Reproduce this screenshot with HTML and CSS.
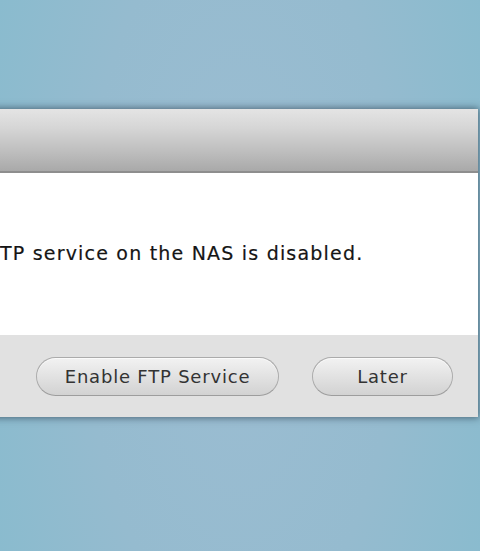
FILE: index.html
```html
<!DOCTYPE html>
<html lang="en">
<head>
    <meta charset="UTF-8">
    <meta name="viewport" content="width=device-width, initial-scale=1.0">
    <title>FTP Service</title>
    <link rel="stylesheet" href="styles.css">
</head>
<body>
    <div class="dialog">
        <div class="dialog-header"></div>
        <div class="dialog-body">
            <p class="message">The FTP service on the NAS is disabled.</p>
        </div>
        <div class="dialog-footer">
            <button class="btn btn-wide">Enable FTP Service</button>
            <button class="btn btn-narrow">Later</button>
        </div>
    </div>
</body>
</html>
```

FILE: styles.css
```css
html, body {
    height: 100%;
}
body {
    font-family: "DejaVu Sans", Verdana, sans-serif;
    margin: 0;
    padding-top: 109px;
    box-sizing: border-box;
    overflow: hidden;
    background: radial-gradient(ellipse 60% 120% at 50% 50%, #9cbdd2 0%, #95bbcf 55%, #88bbce 100%);
    color: #151515;
}
.dialog {
    width: 620px;
    margin-left: -142px;
    box-shadow: 0 0 7px 1px rgba(40, 60, 75, 0.65);
}
.dialog-header {
    height: 62px;
    background: linear-gradient(to bottom, #e4e4e4 0%, #d6d6d6 30%, #bdbdbd 70%, #a9a9a9 100%);
    border-bottom: 2px solid #8e8e8e;
}
.dialog-body {
    height: 162px;
    background-color: #ffffff;
    display: flex;
    align-items: center;
    padding-left: 84px;
}
.message {
    margin: 0 0 3px;
    font-size: 19px;
    letter-spacing: 1.2px;
    -webkit-text-stroke: 0.2px #151515;
}
.dialog-footer {
    height: 82px;
    background-color: #e1e1e1;
    display: flex;
    align-items: center;
    justify-content: flex-end;
    gap: 33px;
    padding-right: 25px;
}
.btn {
    height: 39px;
    border-radius: 20px;
    border: 1px solid #ababab;
    border-bottom-color: #9d9d9d;
    background: linear-gradient(to bottom, #f2f2f2 0%, #e2e2e2 50%, #d2d2d2 100%);
    box-shadow: inset 0 1px 0 #fafafa;
    font-family: "DejaVu Sans", Verdana, sans-serif;
    font-size: 18px;
    letter-spacing: 0.8px;
    color: #333;
    padding: 0;
}
.btn-wide {
    width: 243px;
}
.btn-narrow {
    width: 141px;
}
```
